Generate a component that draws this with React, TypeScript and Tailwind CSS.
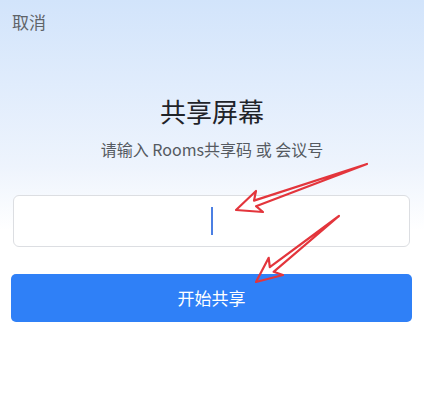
export default function App() {
  return (
    <div
      className="relative flex h-[419px] w-[424px] flex-col overflow-hidden bg-linear-to-b from-[#d2e4fb] via-[#eef4fd] via-40% to-white to-55%"
      style={{ fontFamily: '"Noto Sans CJK SC", "Noto Sans", sans-serif' }}
    >
      {/* Top bar */}
      <div className="px-3 pt-[9px] text-[17px] leading-[26px] text-[#5f6368]">取消</div>

      {/* Header */}
      <header className="mt-[58px] flex flex-col items-center">
        <h1 className="text-[26px] leading-[36px] font-normal text-[#1f2329]">共享屏幕</h1>
        <p className="mt-[8px] text-[16px] leading-[24px] text-[#555a61]">
          请输入 Rooms共享码 或 会议号
        </p>
      </header>

      {/* Input */}
      <div className="mx-[13px] mt-[34px] flex h-[52px] w-[397px] items-center justify-center rounded-md border border-[#dcdee2] bg-white">
        <div className="h-[28px] w-[2px] bg-[#4b7fe3]" />
      </div>

      {/* Button */}
      <button className="mx-[11px] mt-[27px] h-[48px] w-[401px] rounded-[5px] bg-[#2f80f7] text-[17px] text-white">
        开始共享
      </button>

      {/* Annotation arrows */}
      <svg
        className="pointer-events-none absolute inset-0"
        width="424"
        height="419"
        viewBox="0 0 424 419"
      >
        <polygon
          points="236,210 256,191 254,200.6 367,164 256,206.2 263,212"
          fill="none"
          stroke="#e3353c"
          strokeWidth="2.2"
          strokeLinejoin="round"
        />
        <polygon
          points="256,282 268.7,257.8 269.8,267.1 339,216 273.6,271.8 283,275"
          fill="none"
          stroke="#e3353c"
          strokeWidth="2.2"
          strokeLinejoin="round"
        />
      </svg>
    </div>
  );
}
